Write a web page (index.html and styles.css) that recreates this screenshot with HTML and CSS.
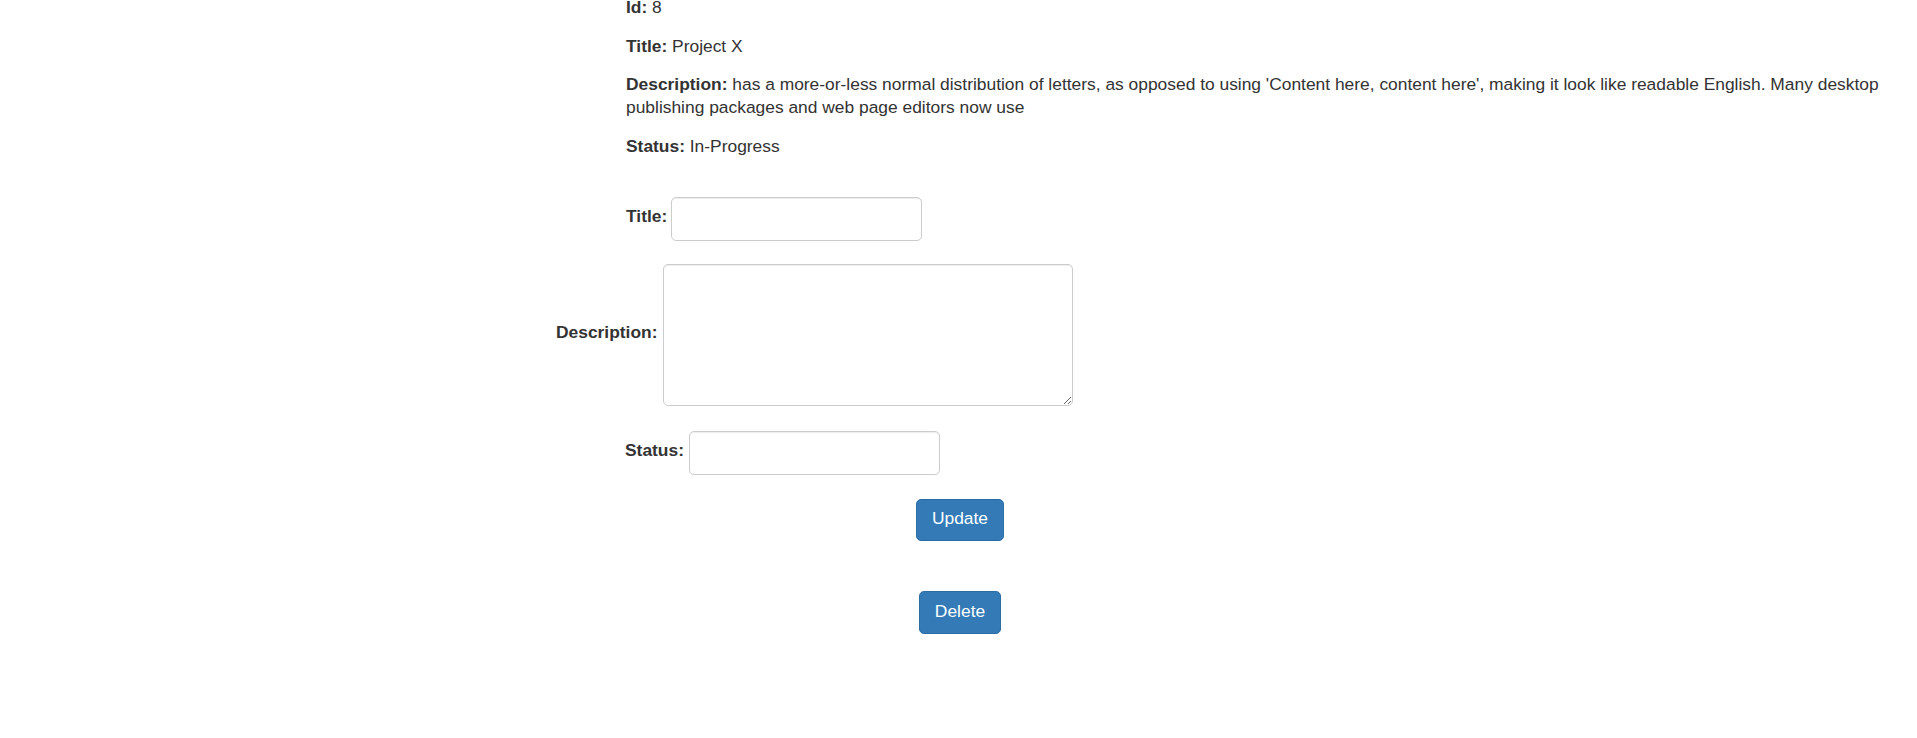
FILE: index.html
```html
<!DOCTYPE html>
<html lang="en">
<head>
<meta charset="utf-8">
<title>Project</title>
<link rel="stylesheet" href="styles.css">
</head>
<body>
<div class="details">
  <p><b>Id:</b> 8</p>
  <p><b>Title:</b> Project X</p>
  <p><b>Description:</b> has a more-or-less normal distribution of letters, as opposed to using 'Content here, content here', making it look like readable English. Many desktop publishing packages and web page editors now use</p>
  <p><b>Status:</b> In-Progress</p>
</div>
<form class="edit-form">
  <div class="row row-title">
    <label class="lbl" for="title">Title:</label>
    <input class="field" id="title" type="text">
  </div>
  <div class="row row-desc">
    <label class="lbl" for="desc">Description:</label>
    <textarea class="field area" id="desc"></textarea>
  </div>
  <div class="row row-status">
    <label class="lbl" for="status">Status:</label>
    <input class="field" id="status" type="text">
  </div>
  <div class="actions">
    <button type="button" class="btn btn-update">Update</button>
    <button type="button" class="btn btn-delete">Delete</button>
  </div>
</form>
</body>
</html>
```

FILE: styles.css
```css
html, body {
  margin: 0;
  padding: 0;
  background: #fff;
}

body {
  font-family: "Liberation Sans", Arial, Helvetica, sans-serif;
  font-size: 17.4px;
  color: #333;
}

.details {
  padding: 0 15px 0 626px;
  margin-top: -4px;
}

.details p {
  margin: 0 0 15.5px;
  line-height: 23px;
}

.details p:last-child {
  margin-bottom: 0;
}

.details b {
  font-weight: bold;
}

.details .desc-text {
  letter-spacing: 0;
}

.edit-form {
  padding-top: 39.5px;
}

.row {
  display: flex;
  align-items: center;
}

.row-title {
  padding-left: 626px;
  gap: 4px;
  margin-bottom: 23px;
}

.row-desc {
  padding-left: 556px;
  gap: 6px;
  margin-bottom: 25px;
}

.row-status {
  padding-left: 625px;
  gap: 5px;
  margin-bottom: 24px;
}

.lbl {
  font-weight: bold;
  font-size: 17.4px;
  color: #333;
  margin-bottom: 6px;
}

.field {
  box-sizing: border-box;
  width: 251px;
  height: 44px;
  margin: 0;
  padding: 7px 14px;
  border: 1px solid #ccc;
  border-radius: 5px;
  background: #fff;
  box-shadow: inset 0 1px 1px rgba(0, 0, 0, 0.075);
  font-family: inherit;
  font-size: 17.4px;
  color: #555;
}

.area {
  width: 410px;
  height: 142px;
  resize: both;
}

.actions {
  display: flex;
  flex-direction: column;
  align-items: center;
  padding-left: 3px;
}

.btn {
  box-sizing: border-box;
  height: 42px;
  padding: 0 15px 2px;
  border: 1px solid #2e6da4;
  border-radius: 5px;
  background: #337ab7;
  color: #fff;
  font-family: inherit;
  font-size: 17.4px;
  line-height: 1;
  cursor: pointer;
}

.btn-update {
  margin-bottom: 50px;
}

.btn-delete {
  height: 43px;
}
```
